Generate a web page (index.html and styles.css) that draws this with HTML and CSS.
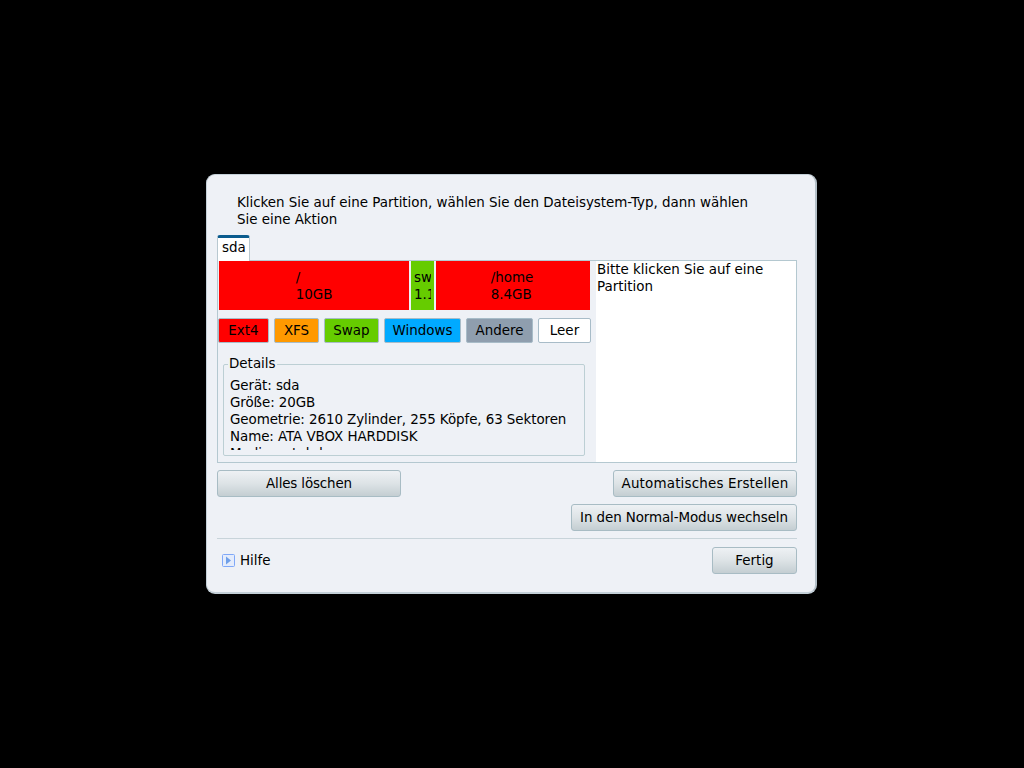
FILE: index.html
```html
<!DOCTYPE html>
<html lang="de">
<head>
  <meta charset="UTF-8">
  <title>Partitionierung</title>
  <link rel="stylesheet" href="styles.css">
</head>
<body>

  <div class="dialog">
    <p class="intro">Klicken Sie auf eine Partition, wählen Sie den Dateisystem-Typ, dann wählen<br>Sie eine Aktion</p>

    <div class="tabs">
      <span class="tab">sda</span>
    </div>

    <div class="tab-frame">
      <div class="left-panel">
        <div class="part-bar">
          <div class="part part-root red"><div class="part-label">/<br>10GB</div></div>
          <div class="part part-swap green"><div class="part-label">sw<br>1.1GB</div></div>
          <div class="part part-home red"><div class="part-label">/home<br>8.4GB</div></div>
        </div>

        <div class="legend-row">
          <span class="chip chip-ext red">Ext4</span>
          <span class="chip chip-xfs orange">XFS</span>
          <span class="chip chip-swap green">Swap</span>
          <span class="chip chip-win blue">Windows</span>
          <span class="chip chip-other gray">Andere</span>
          <span class="chip chip-empty white">Leer</span>
        </div>

        <fieldset class="details">
          <legend>Details</legend>
          <div class="details-text">
            Gerät: sda<br>
            Größe: 20GB<br>
            Geometrie: 2610 Zylinder, 255 Köpfe, 63 Sektoren<br>
            Name: ATA VBOX HARDDISK<br>
            Medienart: hd
          </div>
        </fieldset>
      </div>
      <div class="info-panel">Bitte klicken Sie auf eine Partition</div>
    </div>

    <div class="button-row first-row">
      <button class="btn btn-clear">Alles löschen</button>
      <button class="btn btn-auto">Automatisches Erstellen</button>
    </div>
    <div class="button-row second-row">
      <button class="btn btn-mode">In den Normal-Modus wechseln</button>
    </div>

    <div class="separator"></div>

    <div class="footer-row">
      <span class="help">
        <svg class="help-icon" width="13" height="13" viewBox="0 0 13 13">
          <rect x="0.5" y="0.5" width="12" height="12" rx="1" fill="#e4ecfb" stroke="#7fa8f8"/>
          <path d="M4 2.5 L9 6.5 L4 10.5 Z" fill="#6e9fe8"/>
        </svg>
        Hilfe
      </span>
      <button class="btn btn-done">Fertig</button>
    </div>
  </div>

</body>
</html>
```

FILE: styles.css
```css
html, body {
  margin: 0;
  height: 100%;
}

body {
  background: #000;
  display: flex;
  justify-content: center;
  align-items: center;
  font-family: "DejaVu Sans", sans-serif;
  font-size: 13.45px;
  line-height: 17px;
  color: #000;
}

.dialog {
  box-sizing: border-box;
  width: 611px;
  height: 420px;
  margin-right: 1px;
  background: #eef1f6;
  border: 1px solid #c4d0d8;
  border-right: 2px solid #b4c0c8;
  border-bottom: 2px solid #c4d0d8;
  border-radius: 9px;
  padding: 0 18px 0 10px;
}

.intro {
  margin: 19px 0 0 0;
  padding-left: 20px;
  height: 34px;
  white-space: nowrap;
  letter-spacing: -0.02px;
}

/* Tab */
.tabs {
  display: flex;
  margin-top: 7px;
  height: 26px;
}

.tab {
  box-sizing: border-box;
  width: 33px;
  height: 26px;
  background: #fff;
  border: 1px solid #b8c8d0;
  border-top: 3px solid #0b5c8e;
  border-bottom: none;
  border-radius: 3px 3px 0 0;
  padding: 1px 0 0 4px;
  position: relative;
  z-index: 1;
}

.tab-frame {
  box-sizing: border-box;
  display: flex;
  width: 580px;
  height: 203px;
  margin-top: -1px;
  background: #eef1f6;
  border: 1px solid #b4c8d0;
}

.left-panel {
  width: 377px;
  flex: none;
}

.info-panel {
  flex: 1;
  background: #fff;
  margin-left: 1px;
  padding: 0 1px;
}

/* Partitions */
.part-bar {
  display: flex;
  gap: 2px;
  height: 49px;
  margin-left: 1px;
  width: 371px;
}

.part {
  display: flex;
  justify-content: center;
  overflow: hidden;
  white-space: nowrap;
  padding-top: 8px;
  box-sizing: border-box;
}

.part-root { width: 190px; }
.part-swap { width: 23px; justify-content: flex-start; padding-left: 3px; padding-right: 3px; }
.part-home { width: 154px; padding-right: 2px; }
.part-swap .part-label { width: 17px; overflow: hidden; }

.red { background: #ff0000; }
.green { background: #66cc00; }
.orange { background: #ff9900; }
.blue { background: #00aaff; }
.gray { background: #8f9eae; }
.white { background: #fff; }

.legend-row {
  display: flex;
  margin: 8px 0 0 0;
  height: 25px;
}

.chip {
  box-sizing: border-box;
  height: 25px;
  border: 1px solid #a8bcc8;
  border-radius: 2px;
  text-align: center;
  line-height: 23px;
}

.chip-ext { width: 51px; margin-right: 5px; }
.chip-xfs { width: 45px; margin-right: 5px; }
.chip-swap { width: 55px; margin-right: 5px; }
.chip-win { width: 77px; margin-right: 5px; }
.chip-other { width: 67px; margin-right: 5px; }
.chip-empty { width: 53px; }

/* Details */
.details {
  box-sizing: border-box;
  width: 362px;
  min-width: 0;
  height: 101px;
  margin: 12px 0 0 5px;
  padding: 0 6px;
  border: 1px solid #bccfd4;
  border-radius: 2px;
}

.details legend {
  height: 19px;
  padding: 0 1px;
  margin-left: -2px;
  line-height: 17px;
}

.details-text {
  height: 73px;
  margin-top: 3px;
  overflow: hidden;
  white-space: nowrap;
  letter-spacing: -0.08px;
}

/* Buttons */
.button-row {
  display: flex;
  justify-content: space-between;
}

.first-row { margin-top: 7px; }
.second-row { margin-top: 7px; justify-content: flex-end; }

.btn {
  box-sizing: border-box;
  height: 27px;
  padding: 0;
  font: inherit;
  color: #000;
  border: 1px solid #a8bcc4;
  border-radius: 3px;
  background: linear-gradient(to bottom, #eef1f4 0%, #dde3e6 50%, #c4ced2 100%);
}

.btn-clear { width: 184px; letter-spacing: -0.15px; }
.btn-auto { width: 184px; letter-spacing: 0.18px; }
.btn-mode { width: 226px; letter-spacing: -0.1px; }
.btn-done { width: 85px; }

.separator {
  width: 580px;
  height: 1px;
  margin-top: 7px;
  background: #c8d4da;
}

.footer-row {
  display: flex;
  justify-content: space-between;
  align-items: center;
  margin-top: 8px;
}

.help {
  display: flex;
  align-items: center;
  gap: 5px;
  margin-left: 5px;
}

.help-icon {
  flex: none;
}
```
